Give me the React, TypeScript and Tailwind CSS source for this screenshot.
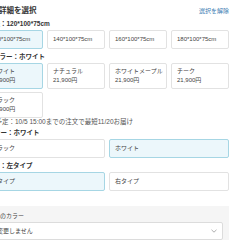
import React from 'react'

type Opt = { name: string; price?: string; selected?: boolean }

const sizes: Opt[] = [
  { name: '120*100*75cm', selected: true },
  { name: '140*100*75cm' },
  { name: '160*100*75cm' },
  { name: '180*100*75cm' },
]

const colors: Opt[] = [
  { name: 'ホワイト', price: '21,900円', selected: true },
  { name: 'ナチュラル', price: '21,900円' },
  { name: 'ホワイトメープル', price: '21,900円' },
  { name: 'チーク', price: '21,900円' },
  { name: 'ブラック', price: '21,900円' },
]

const legs: Opt[] = [{ name: 'ブラック' }, { name: 'ホワイト', selected: true }]
const sides: Opt[] = [{ name: '左タイプ', selected: true }, { name: '右タイプ' }]

function OptionBox({ opt, tall }: { opt: Opt; tall?: boolean }) {
  return (
    <button
      type="button"
      className={`flex flex-col justify-center overflow-hidden whitespace-nowrap rounded-[2px] border px-[5px] text-left text-[6px] leading-[9px] text-[#444] ${
        tall ? 'h-[26px]' : 'h-[19px]'
      } ${opt.selected ? 'border-[#a6d6e4] bg-[#ecf7fb]' : 'border-[#e2e2e2] bg-white'}`}
    >
      <span>{opt.name}</span>
      {opt.price && <span>{opt.price}</span>}
    </button>
  )
}

function Label({ children, className }: { children: React.ReactNode; className: string }) {
  return (
    <p className={`h-[10px] text-[6.5px] font-bold leading-[10px] text-[#333] ${className}`}>
      {children}
    </p>
  )
}

export default function App() {
  return (
    <div className="h-[240px] w-[240px] overflow-hidden bg-white font-['Liberation_Sans','Noto_Sans_CJK_JP',sans-serif]">
      {/* page is cropped on the left, so the column starts off-screen */}
      <div className="ml-[-15px] w-[244px] pt-[5px]">
        <div className="flex h-[12px] items-center justify-between">
          <h2 className="ml-[14px] text-[7.5px] font-bold text-[#333]">詳細を選択</h2>
          <a className="text-[6px] text-[#3f80b4]">選択を解除</a>
        </div>

        <Label className="mt-[2px] ml-[2px]">寸法：120*100*75cm</Label>
        <div className="mt-[1px] grid grid-cols-4 gap-[4px]">
          {sizes.map((o) => (
            <OptionBox key={o.name} opt={o} />
          ))}
        </div>

        <Label className="mt-[3px] ml-[8px]">カラー：ホワイト</Label>
        <div className="mt-[1px] grid grid-cols-4 gap-[3px_4px]">
          {colors.map((o) => (
            <OptionBox key={o.name} opt={o} tall />
          ))}
        </div>
        <p className="ml-[-9px] h-[8px] text-[6.5px] leading-[8px] text-[#555]">
          お届け予定：10/5 15:00までの注文で最短11/20お届け
        </p>

        <Label className="mt-[2px] ml-[-4px]">脚カラー：ホワイト</Label>
        <div className="mt-[1px] grid grid-cols-2 gap-[4px]">
          {legs.map((o) => (
            <OptionBox key={o.name} opt={o} />
          ))}
        </div>

        <Label className="mt-[3px] ml-[2px]">向き：左タイプ</Label>
        <div className="mt-[1px] grid grid-cols-2 gap-[4px]">
          {sides.map((o) => (
            <OptionBox key={o.name} opt={o} />
          ))}
        </div>

        <div className="mt-[15px] bg-[#f5f5f5] pt-[5px] pr-[6px] pb-[6px]">
          <p className="ml-[-15px] h-[10px] text-[6px] leading-[10px] text-[#444]">配線カバーのカラー</p>
          <div className="mt-[1px] flex h-[18px] items-center justify-between rounded-[2px] border border-[#dcdcdc] bg-white pr-[5px] pl-[11px] text-[6px] text-[#444]">
            <span>変更しません</span>
            <svg width="6" height="4" viewBox="0 0 6 4" fill="none">
              <path d="M0.5 0.8 3 3.2 5.5 0.8" stroke="#999" strokeWidth="0.8" />
            </svg>
          </div>
        </div>
      </div>
    </div>
  )
}
